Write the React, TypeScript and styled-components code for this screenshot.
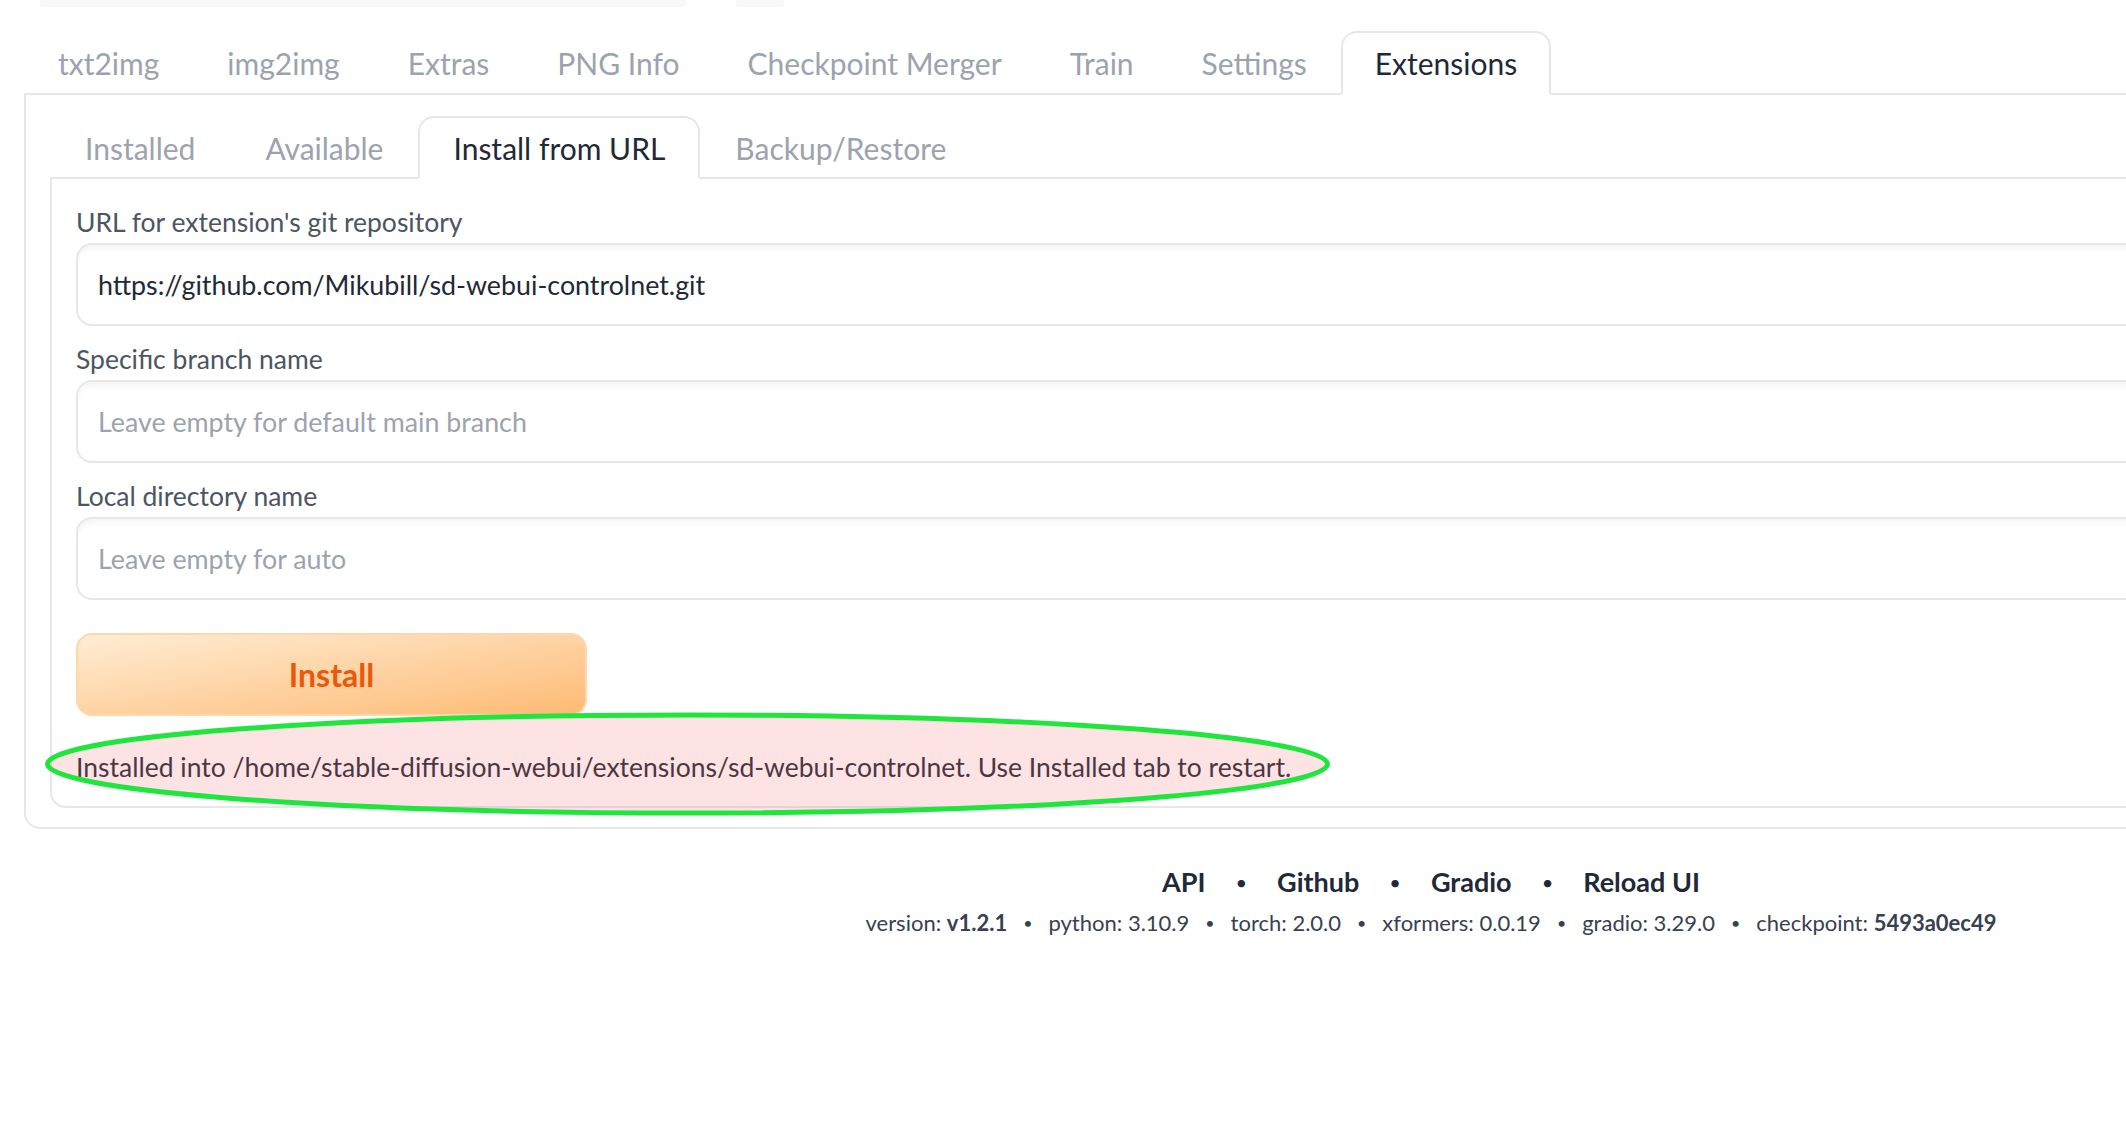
import React from 'react';
import styled, { createGlobalStyle } from 'styled-components';

const GlobalStyle = createGlobalStyle`
    html, body {
        margin: 0;
        padding: 0;
        background: #ffffff;
        overflow: hidden;
    }
    body {
        font-family: Lato, "Open Sans", sans-serif;
    }
`;

const Page = styled.div`
    width: 2862px;
    padding: 0 24px;
    box-sizing: border-box;
`;

const TopStrip = styled.div`
    display: flex;
    gap: 50px;
    padding-left: 16px;
    height: 7px;
`;

const StripBlock = styled.div<{ w: number }>`
    width: ${(p) => p.w}px;
    height: 7px;
    background: #f8f8f8;
    border-radius: 0 0 4px 4px;
`;

const TabBar = styled.div<{ top: number }>`
    display: flex;
    align-items: flex-end;
    padding-top: ${(p) => p.top}px;
`;

const Tab = styled.div<{ active?: boolean; h: number; px: number }>`
    position: relative;
    z-index: 1;
    display: flex;
    align-items: center;
    height: ${(p) => p.h}px;
    padding: 0 ${(p) => p.px}px;
    box-sizing: border-box;
    margin-bottom: -2px;
    font-size: 30px;
    color: ${(p) => (p.active ? '#1f2937' : '#9ca3af')};
    background: ${(p) => (p.active ? '#ffffff' : 'transparent')};
    border: 2px solid ${(p) => (p.active ? '#e5e7eb' : 'transparent')};
    border-bottom: 2px solid ${(p) => (p.active ? '#ffffff' : 'transparent')};
    border-radius: 16px 16px 0 0;
    white-space: nowrap;
`;

const Panel = styled.div<{ pt: number }>`
    border: 2px solid #e5e7eb;
    border-radius: 0 0 16px 16px;
    padding: ${(p) => p.pt}px 24px 19px 24px;
`;

const Field = styled.div`
    display: flex;
    flex-direction: column;
    gap: 1px;
    & + & {
        margin-top: 13px;
    }
`;

const Label = styled.div`
    font-size: 26.5px;
    line-height: 40px;
    color: #4b5563;
`;

const Input = styled.input`
    height: 83px;
    box-sizing: border-box;
    padding: 0 20px;
    border: 2px solid #e5e7eb;
    border-radius: 16px;
    box-shadow: inset 0 6px 8px -4px rgba(0, 0, 0, 0.06);
    font-family: Lato, "Open Sans", sans-serif;
    font-size: 26.8px;
    color: #1f2937;
    background: #ffffff;
    outline: none;
    &::placeholder {
        color: #9ca3af;
    }
`;

const InstallButton = styled.button`
    margin-top: 33px;
    width: 511px;
    height: 83px;
    border: 2px solid #fed7aa;
    border-radius: 16px;
    background: linear-gradient(to bottom right, #ffedd5, #fdba74);
    color: #ea580c;
    font-family: Lato, "Open Sans", sans-serif;
    font-weight: 700;
    font-size: 32px;
`;

const MessageRow = styled.div`
    position: relative;
    margin-top: 31px;
    font-size: 26.5px;
    line-height: 40px;
    color: #1f2937;
`;

const Annotation = styled.svg`
    position: absolute;
    left: -31px;
    top: -34px;
    width: 1285px;
    height: 102px;
    overflow: visible;
    pointer-events: none;
`;

const Footer = styled.div`
    display: flex;
    flex-direction: column;
    align-items: center;
    margin-top: 33px;
`;

const Links = styled.div`
    display: flex;
    align-items: center;
    font-size: 27px;
    line-height: 40px;
    font-weight: 700;
    color: #1f2937;
`;

const Dot = styled.span<{ space: number; size: number }>`
    margin: 0 ${(p) => p.space}px;
    font-size: ${(p) => p.size}px;
    font-weight: 400;
`;

const Versions = styled.div`
    margin-top: 5px;
    display: flex;
    align-items: center;
    font-size: 22px;
    line-height: 32px;
    color: #374151;
    white-space: pre;
`;

const Strong = styled.span<{ bold: boolean }>`
    font-weight: ${(p) => (p.bold ? 700 : 400)};
`;

const topTabs = ['txt2img', 'img2img', 'Extras', 'PNG Info', 'Checkpoint Merger', 'Train', 'Settings', 'Extensions'];
const innerTabs = ['Installed', 'Available', 'Install from URL', 'Backup/Restore'];
const links = ['API', 'Github', 'Gradio', 'Reload UI'];
const versions: [string, string, boolean][] = [
    ['version: ', 'v1.2.1', true],
    ['python: ', '3.10.9', false],
    ['torch: ', '2.0.0', false],
    ['xformers: ', '0.0.19', false],
    ['gradio: ', '3.29.0', false],
    ['checkpoint: ', '5493a0ec49', true],
];

export default function App() {
    return (
        <Page>
            <GlobalStyle />
            <TopStrip>
                <StripBlock w={646} />
                <StripBlock w={48} />
            </TopStrip>
            <TabBar top={24}>
                {topTabs.map((t) => (
                    <Tab key={t} h={64} px={32} active={t === 'Extensions'}>{t}</Tab>
                ))}
            </TabBar>
            <Panel pt={21}>
                <TabBar top={0}>
                    {innerTabs.map((t) => (
                        <Tab key={t} h={63} px={33} active={t === 'Install from URL'}>{t}</Tab>
                    ))}
                </TabBar>
                <Panel pt={23}>
                    <Field>
                        <Label>URL for extension's git repository</Label>
                        <Input defaultValue="https://github.com/Mikubill/sd-webui-controlnet.git" />
                    </Field>
                    <Field>
                        <Label>Specific branch name</Label>
                        <Input placeholder="Leave empty for default main branch" />
                    </Field>
                    <Field>
                        <Label>Local directory name</Label>
                        <Input placeholder="Leave empty for auto" />
                    </Field>
                    <InstallButton>Install</InstallButton>
                    <MessageRow>
                        Installed into /home/stable-diffusion-webui/extensions/sd-webui-controlnet. Use Installed tab to restart.
                        <Annotation viewBox="0 0 1285 102">
                            <ellipse cx="642.5" cy="51" rx="640" ry="49" fill="rgba(244, 114, 114, 0.2)" stroke="#1fe63c" strokeWidth="5" />
                        </Annotation>
                    </MessageRow>
                </Panel>
            </Panel>
            <Footer>
                <Links>
                    {links.map((l, i) => (
                        <React.Fragment key={l}>
                            {i > 0 && <Dot space={30} size={20}>•</Dot>}
                            <span>{l}</span>
                        </React.Fragment>
                    ))}
                </Links>
                <Versions>
                    {versions.map(([k, v, bold], i) => (
                        <React.Fragment key={k}>
                            {i > 0 && <Dot space={16} size={16}>•</Dot>}
                            <span>{k}</span>
                            <Strong bold={bold}>{v}</Strong>
                        </React.Fragment>
                    ))}
                </Versions>
            </Footer>
        </Page>
    );
}
